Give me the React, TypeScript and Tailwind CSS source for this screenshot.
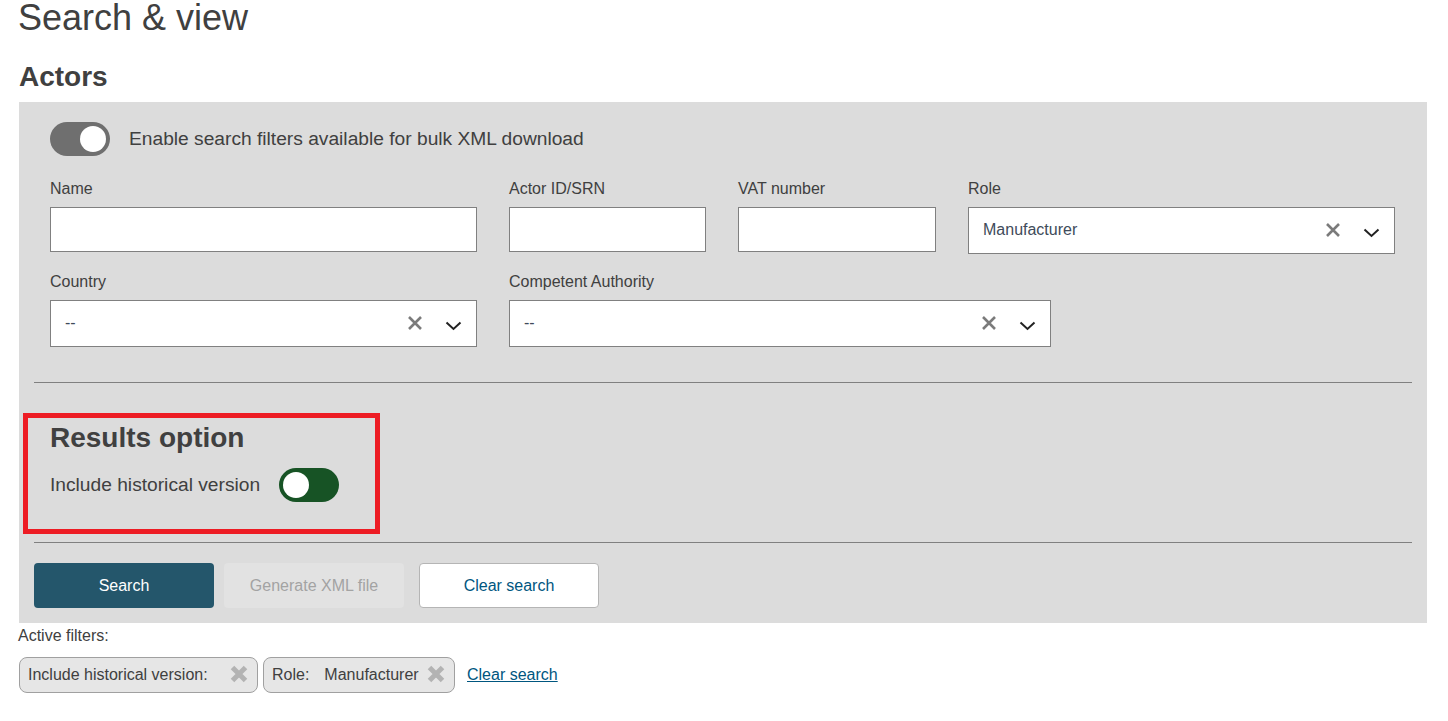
import React from "react";

function ClearIcon() {
  return (
    <svg width="16" height="16" viewBox="0 0 16 16" className="mb-[2px] mr-[22px] shrink-0">
      <path d="M2 2 L14 14 M14 2 L2 14" stroke="#7b7b7b" strokeWidth="2.6" fill="none" />
    </svg>
  );
}

function ChevronIcon() {
  return (
    <svg width="17" height="10" viewBox="0 0 17 10" className="mr-[14px] mt-[4px] shrink-0">
      <path d="M1.5 1.5 L8.5 8 L15.5 1.5" stroke="#222222" strokeWidth="2" fill="none" />
    </svg>
  );
}

function Toggle({ dark }: { dark?: boolean }) {
  return (
    <div className={`flex h-[34px] w-[60px] shrink-0 items-center rounded-full px-[4px] ${dark ? "bg-[#175325] justify-start" : "bg-[#6f6f6f] justify-end"}`}>
      <div className="h-[26px] w-[26px] rounded-full bg-white" />
    </div>
  );
}

function Field({ label, width, select, value, h = "h-[45px]" }: { label: string; width: string; select?: boolean; value?: string; h?: string }) {
  return (
    <div className={`flex shrink-0 flex-col ${width}`}>
      <label className="mb-[13px] h-[10px] text-[16px] leading-[10px] text-[#404040]">{label}</label>
      <div className={`flex items-center border border-[#808080] bg-white ${h}`}>
        {select && (
          <>
            <span className="flex-1 pb-[1px] pl-[14px] text-[16px] text-[#404b5a]">{value}</span>
            <ClearIcon />
            <ChevronIcon />
          </>
        )}
      </div>
    </div>
  );
}

function Chip({ label, value, width }: { label: string; value?: string; width: string }) {
  return (
    <div className={`flex h-[36px] items-center rounded-[8px] border border-[#a0a0a0] bg-[#e6e6e6] pl-[8px] pr-[9px] text-[16px] text-[#404040] ${width}`}>
      <span className="flex-1 whitespace-nowrap">
        {label}
        {value && <span className="ml-[15px]">{value}</span>}
      </span>
      <svg width="18" height="18" viewBox="0 0 18 18" className="mb-[2px] shrink-0">
        <path d="M2.5 2.5 L15.5 15.5 M15.5 2.5 L2.5 15.5" stroke="#b3b3b3" strokeWidth="5" fill="none" />
      </svg>
    </div>
  );
}

export default function App() {
  return (
    <div className="relative h-[721px] w-[1448px] overflow-hidden bg-white font-['Liberation_Sans',Arial,sans-serif] text-[#404040]">
      <div className="pl-[19px] pr-[21px]">
        <h1 className="-ml-px h-[58px] text-[36px] leading-[36px] text-[#404040]">Search &amp; view</h1>
        <h2 className="h-[44px] text-[28px] font-bold leading-[38px] text-[#404040]">Actors</h2>
        <div className="flex h-[521px] flex-col bg-[#dcdcdc] px-[15px]">
          <div className="mt-[20px] flex items-center gap-[19px] pl-[16px]">
            <Toggle />
            <span className="text-[19.2px] leading-[32px]">Enable search filters available for bulk XML download</span>
          </div>
          <div className="mt-[28px] flex gap-[32px] pl-[16px]">
            <Field label="Name" width="w-[427px]" />
            <Field label="Actor ID/SRN" width="w-[197px]" />
            <Field label="VAT number" width="w-[198px]" />
            <Field label="Role" width="w-[427px]" select value="Manufacturer" h="h-[47px]" />
          </div>
          <div className="mt-[23px] flex gap-[32px] pl-[16px]">
            <Field label="Country" width="w-[427px]" select value="--" h="h-[47px]" />
            <Field label="Competent Authority" width="w-[542px]" select value="--" h="h-[47px]" />
          </div>
          <div className="mt-[35px] h-px bg-[#808080]" />
          <div className="pl-[16px]">
            <h2 className="mt-[39px] text-[28px] font-bold leading-[32px]">Results option</h2>
            <div className="mt-[14px] flex items-center gap-[19px]">
              <span className="text-[19.2px]">Include historical version</span>
              <Toggle dark />
            </div>
          </div>
          <div className="mt-[40px] h-px bg-[#808080]" />
          <div className="mt-[20px] flex text-[16px]">
            <button className="h-[45px] w-[180px] rounded-[4px] bg-[#24566b] text-white">Search</button>
            <button className="ml-[10px] h-[45px] w-[180px] rounded-[4px] bg-[#e2e2e2] text-[#a3a3a3]">Generate XML file</button>
            <button className="ml-[15px] h-[45px] w-[180px] rounded-[4px] border border-[#b5b5b5] bg-white text-[#00567f]">Clear search</button>
          </div>
        </div>
        <div className="-ml-px mt-[4px] text-[16px] leading-[18px]">Active filters:</div>
        <div className="mt-[12px] flex items-center gap-[5px]">
          <Chip label="Include historical version:" width="w-[239px]" />
          <Chip label="Role:" value="Manufacturer" width="w-[192px]" />
          <a className="ml-[7px] text-[16px] text-[#00567f] underline">Clear search</a>
        </div>
      </div>
      <div className="absolute left-[23px] top-[413px] h-[121px] w-[357px] border-[5px] border-[#ed1c24]" />
    </div>
  );
}
